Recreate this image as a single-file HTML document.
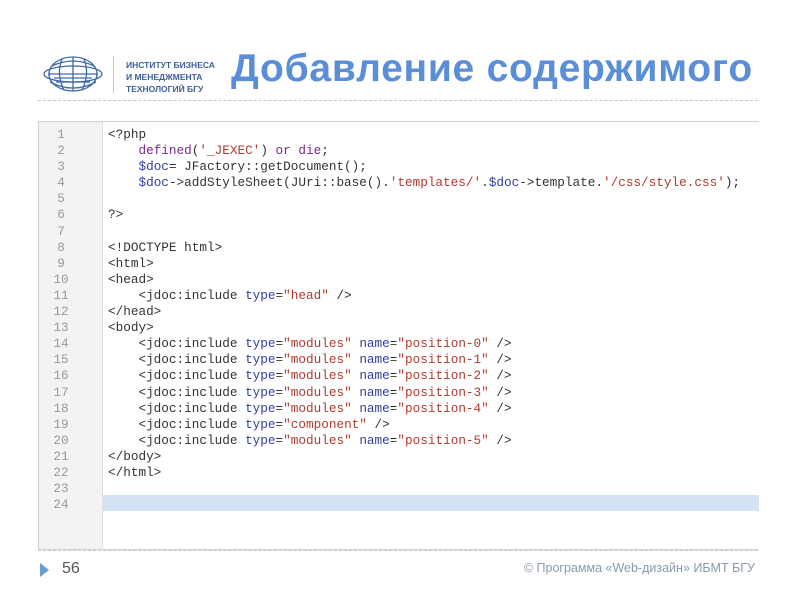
<!DOCTYPE html>
<html><head><meta charset="utf-8"><style>
body{margin:0;width:800px;height:600px;background:#fff;position:relative;overflow:hidden;font-family:"Liberation Sans",sans-serif}
.t{position:absolute;left:231px;top:47px;font-size:39px;font-weight:bold;color:#5a8ed8;white-space:nowrap;letter-spacing:0.75px}
.lg{position:absolute;left:126px;top:59px;font-size:8.5px;line-height:12px;color:#3d5f9a;font-weight:bold}
.vl{position:absolute;left:113px;top:56px;width:1px;height:37px;background:#b8c8dc}
.d1{position:absolute;left:38px;top:100px;width:720px;border-top:1px dashed #c0c8d4}
.d2{position:absolute;left:38px;top:550px;width:720px;border-top:1px dashed #c0c8d4}
.box{position:absolute;left:38px;top:121px;width:720px;height:427px;border:1px solid #d0d0d0;border-right:none;background:#fff}
.gut{position:absolute;left:0;top:0;width:63px;height:427px;background:#f3f3f3;border-right:1px solid #e0e0e0}
.hl{position:absolute;left:64px;top:373px;width:656px;height:16px;background:#d3e2f5}
pre{margin:0;position:absolute;top:5px;font-family:"Liberation Mono",monospace;font-size:12.7px;line-height:16.1px}
.num{left:0;width:44px;text-align:center;color:#999}
.code{left:69px;color:#333}
.k{color:#7a2a8a}.s{color:#b03a2e}.a{color:#2f3fa0}.v{color:#2f3fa0}
.foot{position:absolute;right:45px;top:561px;font-size:12.5px;color:#8a9aac}
.pg{position:absolute;left:62px;top:560px;font-size:16px;color:#555}
.tri{position:absolute;left:40px;top:563px;width:0;height:0;border-left:9px solid #6a9ed0;border-top:7px solid transparent;border-bottom:7px solid transparent}
</style></head><body>
<svg style="position:absolute;left:42px;top:54px" width="62" height="40" viewBox="0 0 62 40">
<g fill="none" stroke="#3d6aa8" stroke-width="1.3">
<ellipse cx="31" cy="20" rx="24" ry="17"/>
<ellipse cx="31" cy="20" rx="29" ry="8"/>
<path d="M10 12 Q31 2 52 12 M8 28 Q31 40 54 28 M20 5 Q14 20 22 36 M42 5 Q48 20 40 36 M31 3 L31 37"/>
<path d="M6 20 L56 20 M12 24 L50 24 M14 28 L48 28"/>
</g></svg>
<div class="vl"></div>
<div class="lg">ИНСТИТУТ БИЗНЕСА<br>И МЕНЕДЖМЕНТА<br>ТЕХНОЛОГИЙ БГУ</div>
<div class="t">Добавление содержимого</div>
<div class="d1"></div>
<div class="box">
<div class="gut"></div>
<div class="hl"></div>
<pre class="num">1
2
3
4
5
6
7
8
9
10
11
12
13
14
15
16
17
18
19
20
21
22
23
24</pre>
<pre class="code">&lt;?php
    <span class="k">defined</span>(<span class="s">'_JEXEC'</span>) <span class="k">or die</span>;
    <span class="v">$doc</span>= JFactory::getDocument();
    <span class="v">$doc</span>-&gt;addStyleSheet(JUri::base().<span class="s">'templates/'</span>.<span class="v">$doc</span>-&gt;template.<span class="s">'/css/style.css'</span>);

?&gt;

&lt;!DOCTYPE html&gt;
&lt;html&gt;
&lt;head&gt;
    &lt;jdoc:include <span class="a">type</span>=<span class="s">"head"</span> /&gt;
&lt;/head&gt;
&lt;body&gt;
    &lt;jdoc:include <span class="a">type</span>=<span class="s">"modules"</span> <span class="a">name</span>=<span class="s">"position-0"</span> /&gt;
    &lt;jdoc:include <span class="a">type</span>=<span class="s">"modules"</span> <span class="a">name</span>=<span class="s">"position-1"</span> /&gt;
    &lt;jdoc:include <span class="a">type</span>=<span class="s">"modules"</span> <span class="a">name</span>=<span class="s">"position-2"</span> /&gt;
    &lt;jdoc:include <span class="a">type</span>=<span class="s">"modules"</span> <span class="a">name</span>=<span class="s">"position-3"</span> /&gt;
    &lt;jdoc:include <span class="a">type</span>=<span class="s">"modules"</span> <span class="a">name</span>=<span class="s">"position-4"</span> /&gt;
    &lt;jdoc:include <span class="a">type</span>=<span class="s">"component"</span> /&gt;
    &lt;jdoc:include <span class="a">type</span>=<span class="s">"modules"</span> <span class="a">name</span>=<span class="s">"position-5"</span> /&gt;
&lt;/body&gt;
&lt;/html&gt;</pre>
</div>
<div class="d2"></div>
<div class="tri"></div>
<div class="pg">56</div>
<div class="foot">© Программа «Web-дизайн» ИБМТ БГУ</div>
</body></html>
